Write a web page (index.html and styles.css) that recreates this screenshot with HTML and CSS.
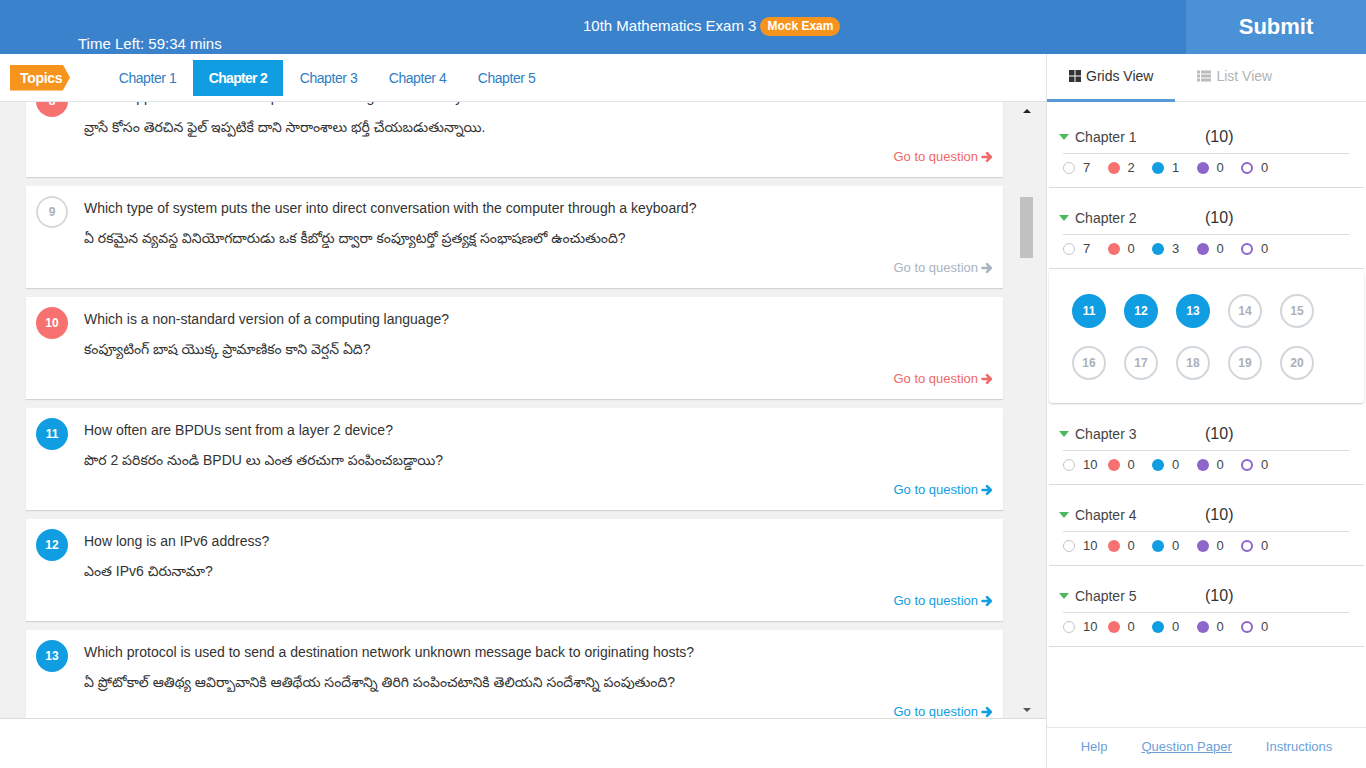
FILE: index.html
```html
<!DOCTYPE html>
<html lang="en">
<head>
<meta charset="utf-8">
<title>10th Mathematics Exam 3</title>
<link rel="stylesheet" href="styles.css">
</head>
<body>
<div class="app">
  <header class="topbar">
    <div class="title-area">
      <div class="title-row">
        <span class="exam-title">10th Mathematics Exam 3</span>
        <span class="badge">Mock Exam</span>
      </div>
      <div class="time-left">Time Left: 59:34 mins</div>
    </div>
    <div class="submit">Submit</div>
  </header>

  <div class="main">
    <section class="left">
      <nav class="chapter-tabs">
        <span class="topics">Topics</span>
        <a class="tab">Chapter 1</a>
        <a class="tab active">Chapter 2</a>
        <a class="tab">Chapter 3</a>
        <a class="tab">Chapter 4</a>
        <a class="tab">Chapter 5</a>
      </nav>

      <div class="content">
        <div class="list-viewport">
          <div class="list">
            <article class="card">
              <span class="num red">8</span>
              <div class="qbody">
                <p class="q-en">What happens when a file is opened for writing and it already exists?</p>
                <p class="q-te">వ్రాసే కోసం తెరచిన ఫైల్ ఇప్పటికే దాని సారాంశాలు భర్తీ చేయబడుతున్నాయి.</p>
                <div class="go red-t">Go to question <svg class="arrow" viewBox="0 0 12 12"><path d="M1.5 6h8M6 2.2L9.8 6 6 9.8"/></svg></div>
              </div>
            </article>
            <article class="card">
              <span class="num empty">9</span>
              <div class="qbody">
                <p class="q-en">Which type of system puts the user into direct conversation with the computer through a keyboard?</p>
                <p class="q-te">ఏ రకమైన వ్యవస్థ వినియోగదారుడు ఒక కీబోర్డు ద్వారా కంప్యూటర్తో ప్రత్యక్ష సంభాషణలో ఉంచుతుంది?</p>
                <div class="go gray-t">Go to question <svg class="arrow" viewBox="0 0 12 12"><path d="M1.5 6h8M6 2.2L9.8 6 6 9.8"/></svg></div>
              </div>
            </article>
            <article class="card">
              <span class="num red">10</span>
              <div class="qbody">
                <p class="q-en">Which is a non-standard version of a computing language?</p>
                <p class="q-te">కంప్యూటింగ్ బాష యొక్క ప్రామాణికం కాని వెర్షన్ ఏది?</p>
                <div class="go red-t">Go to question <svg class="arrow" viewBox="0 0 12 12"><path d="M1.5 6h8M6 2.2L9.8 6 6 9.8"/></svg></div>
              </div>
            </article>
            <article class="card">
              <span class="num blue">11</span>
              <div class="qbody">
                <p class="q-en">How often are BPDUs sent from a layer 2 device?</p>
                <p class="q-te">పొర 2 పరికరం నుండి BPDU లు ఎంత తరచుగా పంపించబడ్డాయి?</p>
                <div class="go blue-t">Go to question <svg class="arrow" viewBox="0 0 12 12"><path d="M1.5 6h8M6 2.2L9.8 6 6 9.8"/></svg></div>
              </div>
            </article>
            <article class="card">
              <span class="num blue">12</span>
              <div class="qbody">
                <p class="q-en">How long is an IPv6 address?</p>
                <p class="q-te">ఎంత IPv6 చిరునామా?</p>
                <div class="go blue-t">Go to question <svg class="arrow" viewBox="0 0 12 12"><path d="M1.5 6h8M6 2.2L9.8 6 6 9.8"/></svg></div>
              </div>
            </article>
            <article class="card">
              <span class="num blue">13</span>
              <div class="qbody">
                <p class="q-en">Which protocol is used to send a destination network unknown message back to originating hosts?</p>
                <p class="q-te">ఏ ప్రోటోకాల్ ఆతిథ్య ఆవిర్భావానికి ఆతిథేయ సందేశాన్ని తిరిగి పంపించటానికి తెలియని సందేశాన్ని పంపుతుంది?</p>
                <div class="go blue-t">Go to question <svg class="arrow" viewBox="0 0 12 12"><path d="M1.5 6h8M6 2.2L9.8 6 6 9.8"/></svg></div>
              </div>
            </article>
          </div>
        </div>
        <div class="scrollbar">
          <div class="sb-btn"><span class="tri-up"></span></div>
          <div class="sb-track"><div class="sb-thumb"></div></div>
          <div class="sb-btn"><span class="tri-down"></span></div>
        </div>
      </div>

      <div class="left-footer"></div>
    </section>

    <aside class="sidebar">
      <div class="view-tabs">
        <div class="vtab active">
          <svg class="vicon grid-i" viewBox="0 0 12 12"><rect x="0" y="0" width="5.5" height="5.5"/><rect x="6.5" y="0" width="5.5" height="5.5"/><rect x="0" y="6.5" width="5.5" height="5.5"/><rect x="6.5" y="6.5" width="5.5" height="5.5"/></svg>
          Grids View
        </div>
        <div class="vtab">
          <svg class="vicon list-i" viewBox="0 0 14 12"><rect x="0" y="0.5" width="3" height="3"/><rect x="4" y="0.5" width="10" height="3"/><rect x="0" y="4.5" width="3" height="3"/><rect x="4" y="4.5" width="10" height="3"/><rect x="0" y="8.5" width="3" height="3"/><rect x="4" y="8.5" width="10" height="3"/></svg>
          List View
        </div>
      </div>

      <div class="chapters">
        <div class="chapter first">
          <div class="ch-head"><span class="caret"></span><span class="ch-name">Chapter 1</span><span class="ch-count">(10)</span></div>
          <div class="ch-stats">
            <span class="stat"><i class="dot ring-gray"></i>7</span>
            <span class="stat"><i class="dot fill-red"></i>2</span>
            <span class="stat"><i class="dot fill-blue"></i>1</span>
            <span class="stat"><i class="dot fill-purple"></i>0</span>
            <span class="stat"><i class="dot ring-purple"></i>0</span>
          </div>
        </div>
        <div class="chapter">
          <div class="ch-head"><span class="caret"></span><span class="ch-name">Chapter 2</span><span class="ch-count">(10)</span></div>
          <div class="ch-stats">
            <span class="stat"><i class="dot ring-gray"></i>7</span>
            <span class="stat"><i class="dot fill-red"></i>0</span>
            <span class="stat"><i class="dot fill-blue"></i>3</span>
            <span class="stat"><i class="dot fill-purple"></i>0</span>
            <span class="stat"><i class="dot ring-purple"></i>0</span>
          </div>
        </div>
        <div class="grid-box">
          <span class="g filled">11</span>
          <span class="g filled">12</span>
          <span class="g filled">13</span>
          <span class="g">14</span>
          <span class="g">15</span>
          <span class="g">16</span>
          <span class="g">17</span>
          <span class="g">18</span>
          <span class="g">19</span>
          <span class="g">20</span>
        </div>
        <div class="chapter">
          <div class="ch-head"><span class="caret"></span><span class="ch-name">Chapter 3</span><span class="ch-count">(10)</span></div>
          <div class="ch-stats">
            <span class="stat"><i class="dot ring-gray"></i>10</span>
            <span class="stat"><i class="dot fill-red"></i>0</span>
            <span class="stat"><i class="dot fill-blue"></i>0</span>
            <span class="stat"><i class="dot fill-purple"></i>0</span>
            <span class="stat"><i class="dot ring-purple"></i>0</span>
          </div>
        </div>
        <div class="chapter">
          <div class="ch-head"><span class="caret"></span><span class="ch-name">Chapter 4</span><span class="ch-count">(10)</span></div>
          <div class="ch-stats">
            <span class="stat"><i class="dot ring-gray"></i>10</span>
            <span class="stat"><i class="dot fill-red"></i>0</span>
            <span class="stat"><i class="dot fill-blue"></i>0</span>
            <span class="stat"><i class="dot fill-purple"></i>0</span>
            <span class="stat"><i class="dot ring-purple"></i>0</span>
          </div>
        </div>
        <div class="chapter">
          <div class="ch-head"><span class="caret"></span><span class="ch-name">Chapter 5</span><span class="ch-count">(10)</span></div>
          <div class="ch-stats">
            <span class="stat"><i class="dot ring-gray"></i>10</span>
            <span class="stat"><i class="dot fill-red"></i>0</span>
            <span class="stat"><i class="dot fill-blue"></i>0</span>
            <span class="stat"><i class="dot fill-purple"></i>0</span>
            <span class="stat"><i class="dot ring-purple"></i>0</span>
          </div>
        </div>
      </div>

      <footer class="side-footer">
        <a class="flink">Help</a>
        <a class="flink underline">Question Paper</a>
        <a class="flink">Instructions</a>
      </footer>
    </aside>
  </div>
</div>
</body>
</html>
```

FILE: styles.css
```css
* { box-sizing: border-box; }
html, body { margin: 0; padding: 0; }
body {
  font-family: "Liberation Sans", Arial, "Noto Sans Telugu", "Noto Sans", sans-serif;
  color: #333;
  background: #fff;
}
p { margin: 0; }
a { cursor: pointer; }

.app { width: 1366px; height: 768px; display: flex; flex-direction: column; overflow: hidden; }

/* Header */
.topbar { height: 54px; display: flex; background: #3a83cc; color: #fff; flex-shrink: 0; }
.title-area { flex: 1; padding-top: 16px; }
.title-row { display: flex; align-items: center; padding-left: 583px; height: 20px; }
.exam-title { font-size: 15px; line-height: 20px; }
.badge {
  margin-left: 4px; background: #f7941d; color: #fff; font-weight: bold;
  font-size: 12px; line-height: 19px; height: 19px; padding: 0 7px; border-radius: 10px;
}
.time-left { padding-left: 78px; font-size: 15px; line-height: 18px; margin-top: -1px; }
.submit {
  width: 180px; background: #4a91d6; display: flex; align-items: center; justify-content: center;
  font-weight: bold; font-size: 22px;
}

/* Main */
.main { flex: 1; display: flex; min-height: 0; }
.left { width: 1046px; display: flex; flex-direction: column; }

.chapter-tabs {
  height: 48px; display: flex; align-items: center; gap: 2px; padding-left: 10px;
  border-bottom: 1px solid #dde3e8; background: #fff; flex-shrink: 0;
}
.topics {
  background: #f7941d; color: #fff; font-weight: bold; font-size: 14px; letter-spacing: -0.3px;
  height: 26px; line-height: 26px; width: 60px; padding-left: 10px; margin-right: 32px;
  clip-path: polygon(0 0, 88% 0, 100% 50%, 88% 100%, 0 100%);
}
.tab {
  width: 87px; text-align: center; height: 36px; line-height: 36px; font-size: 14px; color: #2f7dc3;
  letter-spacing: -0.45px; white-space: nowrap;
}
.tab.active { width: 90px; background: #109de1; color: #fff; font-weight: bold; letter-spacing: -0.7px; }

.content { flex: 1; display: flex; background: #f1f1f1; min-height: 0; }
.list-viewport { width: 1018px; overflow: hidden; }
.list { margin-top: -27px; padding-left: 26px; padding-right: 15px; display: flex; flex-direction: column; gap: 9px; }

.card {
  height: 102px; background: #fff; display: flex; padding: 10px 10px 0 10px;
  box-shadow: 0 1px 1px rgba(0,0,0,0.12);
}
.num {
  width: 32px; height: 32px; border-radius: 50%; flex-shrink: 0;
  display: flex; align-items: center; justify-content: center;
  font-size: 12px; font-weight: bold; color: #fff; margin-right: 16px;
}
.num.red { background: #f87171; }
.num.blue { background: #109de1; }
.num.empty { border: 2px solid #d5dade; color: #a9b2bc; background: #fff; }

.qbody { flex: 1; padding-top: 2px; }
.q-en { font-size: 14px; line-height: 20px; color: #333; white-space: nowrap; }
.q-te { font-size: 14px; line-height: 20px; color: #333; margin-top: 10px; white-space: nowrap; overflow: hidden; height: 20px; }
.go { margin-top: 10px; text-align: right; font-size: 13px; line-height: 20px; display: flex; justify-content: flex-end; align-items: center; gap: 3px; }
.arrow { width: 12px; height: 12px; fill: none; stroke: currentColor; stroke-width: 2.6; stroke-linecap: round; stroke-linejoin: round; }
.red-t { color: #f06868; }
.gray-t { color: #a9b4bf; }
.blue-t { color: #109de1; }

.scrollbar { width: 17px; display: flex; flex-direction: column; background: #f1f1f1; }
.sb-btn { height: 17px; display: flex; align-items: center; justify-content: center; }
.tri-up { width: 0; height: 0; border-left: 4px solid transparent; border-right: 4px solid transparent; border-bottom: 4px solid #222; }
.tri-down { width: 0; height: 0; border-left: 4px solid transparent; border-right: 4px solid transparent; border-top: 4px solid #555; }
.sb-track { flex: 1; padding: 0 2px; }
.sb-thumb { margin-top: 78px; height: 61px; background: #c1c1c1; }

.left-footer { height: 50px; background: #fff; border-top: 1px solid #dcdcdc; flex-shrink: 0; }

/* Sidebar */
.sidebar { width: 320px; border-left: 1px solid #dde3e8; display: flex; flex-direction: column; background: #fff; }
.view-tabs { height: 48px; display: flex; border-bottom: 1px solid #dde3e8; flex-shrink: 0; }
.vtab {
  padding: 0 22px 2px; display: flex; align-items: center; gap: 5px; font-size: 14px; color: #b3b3b3;
  border-bottom: 3px solid transparent; margin-bottom: -1px;
}
.vtab.active { color: #333; border-bottom-color: #5a9ad8; }
.vicon { height: 12px; }
.grid-i { width: 12px; fill: #333; }
.list-i { width: 14px; fill: #bbb; }

.chapters { flex: 1; padding-top: 5px; }
.chapter { margin: 0 2px; padding: 20px 15px 0 10px; height: 81px; border-bottom: 1px solid #dadada; }
.ch-head { display: flex; align-items: center; height: 20px; }
.caret { width: 0; height: 0; border-left: 5px solid transparent; border-right: 5px solid transparent; border-top: 6px solid #4cba5c; margin-right: 6px; }
.ch-name { width: 130px; font-size: 14px; color: #444; }
.ch-count { font-size: 16px; color: #333; }
.ch-stats { margin: 6px 0 0 4px; border-top: 1px solid #ddd; display: flex; align-items: center; height: 28px; }
.stat { width: 44.5px; display: flex; align-items: center; font-size: 13px; color: #444; }
.dot { width: 12px; height: 12px; border-radius: 50%; margin-right: 8px; display: inline-block; }
.ring-gray { border: 1.5px solid #c6c6c6; }
.fill-red { background: #f87171; }
.fill-blue { background: #109de1; }
.fill-purple { background: #8e66c9; }
.ring-purple { border: 2px solid #8e66c9; }

.grid-box {
  margin: 2px 2px 1px; padding: 23px 0 23px 23px; display: grid;
  grid-template-columns: repeat(5, 34px); gap: 18px; border-radius: 3px;
  box-shadow: 0 1px 2px rgba(0,0,0,0.22); background: #fff;
}
.g {
  width: 34px; height: 34px; border-radius: 50%; border: 2px solid #d2d7dc; color: #aab1b8;
  font-size: 12px; font-weight: bold; display: flex; align-items: center; justify-content: center;
}
.g.filled { background: #109de1; border-color: #109de1; color: #fff; }

.side-footer {
  height: 41px; border-top: 1px solid #e8e8e8; display: flex; align-items: center; justify-content: center; gap: 34px;
  padding-bottom: 4px; flex-shrink: 0;
}
.flink { font-size: 13px; color: #6b9fd7; }
.flink.underline { text-decoration: underline; }
```
